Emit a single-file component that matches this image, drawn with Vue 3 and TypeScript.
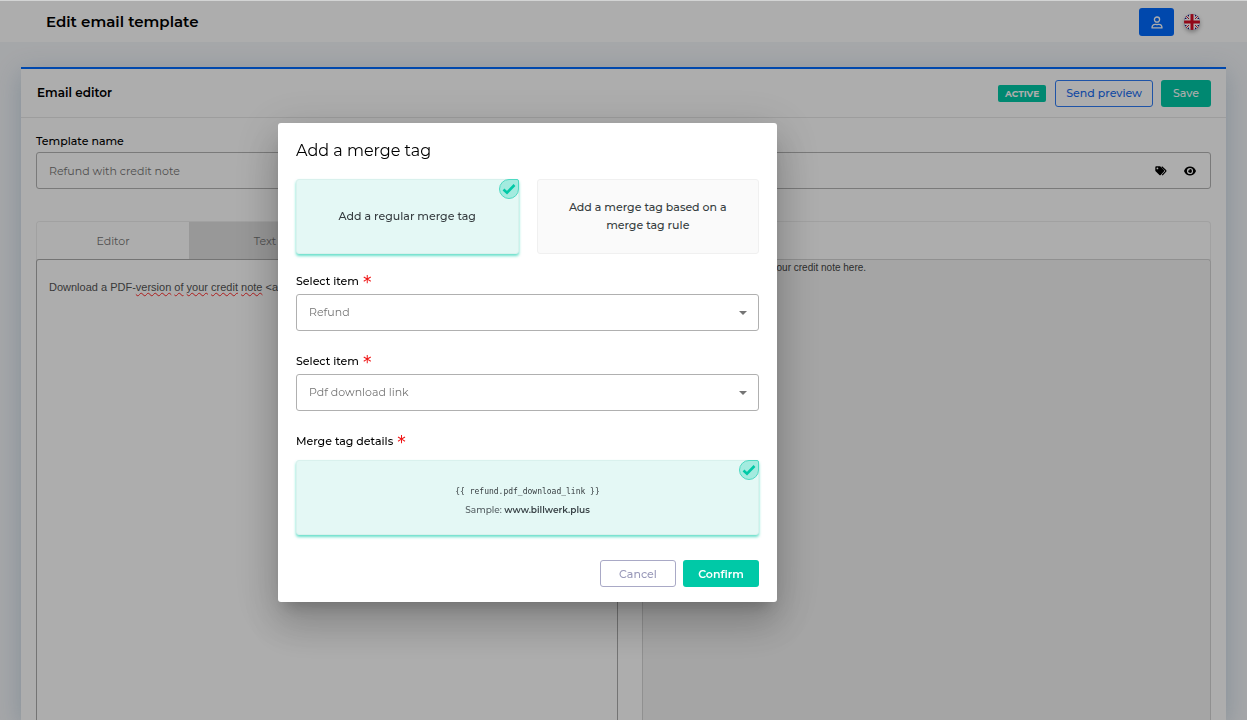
<script setup lang="ts">
import { ref } from 'vue'

interface Word {
  text: string
  misspelled: boolean
}

const templateName = ref('Refund with credit note')
const activeTab = ref('Editor')
const tabs: string[] = ['Editor', 'Text']

const bodyWords: Word[] = [
  { text: 'version', misspelled: true },
  { text: 'of', misspelled: true },
  { text: 'your', misspelled: true },
  { text: 'credit', misspelled: true },
  { text: 'note', misspelled: true },
  { text: '<a', misspelled: false },
  { text: 'href', misspelled: true },
]

const mode = ref('regular')
const modes = [
  { value: 'regular', label: 'Add a regular merge tag' },
  { value: 'rule', label: 'Add a merge tag based on a merge tag rule' },
]

const entity = ref('Refund')
const field = ref('Pdf download link')
const detail = ref('link')
const mergeTag = '{{ refund.pdf_download_link }}'
</script>

<template>
  <div class="page">
    <header class="topbar">
      <h1>Edit email template</h1>
      <div class="topbar-actions">
        <button class="user" type="button" aria-label="Account">
          <svg width="12" height="13" viewBox="0 0 12 13" fill="none" stroke="currentColor" stroke-width="1.3">
            <circle cx="6" cy="3.6" r="2.6" />
            <path d="M1 11.9c0-2.5 1.4-3.6 3.2-3.6.7 0 1 .3 1.8.3s1.1-.3 1.8-.3c1.8 0 3.200 1.100 3.200 3.600z" stroke-linejoin="round" />
          </svg>
        </button>
        <button class="flag" type="button" aria-label="English">
          <svg width="16" height="16" viewBox="0 0 16 16">
            <defs><clipPath id="disc"><circle cx="8" cy="8" r="8" /></clipPath></defs>
            <g clip-path="url(#disc)">
              <rect width="16" height="16" fill="#12127d" />
              <path d="M0 0l16 16M16 0L0 16" stroke="#fff" stroke-width="3" />
              <path d="M0 0l16 16M16 0L0 16" stroke="#d2122e" stroke-width="1" />
              <path d="M8 0v16M0 8h16" stroke="#fff" stroke-width="6" />
              <path d="M8 0v16M0 8h16" stroke="#d80d25" stroke-width="3" />
            </g>
          </svg>
        </button>
      </div>
    </header>

    <main class="card">
      <div class="card-head">
        <h2>Email editor</h2>
        <div class="card-actions">
          <span class="badge">ACTIVE</span>
          <button class="btn outline-blue" type="button">Send preview</button>
          <button class="btn solid" type="button">Save</button>
        </div>
      </div>

      <div class="card-body">
        <label class="field-label" for="template-name">Template name</label>
        <div class="name-box">
          <input id="template-name" v-model="templateName" type="text" />
          <button class="icon-btn" type="button" aria-label="Merge tags">
            <svg width="12" height="10" viewBox="0 0 12 10">
              <path fill="currentColor" fill-rule="evenodd" d="M.3 1.200C.3.700.7.300 1.200.300h3.500c.3 0 .5.100.700.300l3.500 3.500c.4.400.4.900 0 1.300L5.700 8.900c-.4.400-.9.400-1.300 0L.600 5.200A1 1 0 0 1 .300 4.500zM2.400 1.500a.9.900 0 1 0 0 1.800.9.900 0 0 0 0-1.800z" />
              <path fill="none" stroke="currentColor" stroke-width="1.200" d="M6.700.800l4 3.700c.3.300.3.600 0 .900L7.200 9.100" />
            </svg>
          </button>
          <button class="icon-btn" type="button" aria-label="Preview">
            <svg width="12" height="10" viewBox="0 0 12 10">
              <path fill="currentColor" fill-rule="evenodd" d="M6 .600C3.400.600 1.300 2.100.200 4.500a1 1 0 0 0 0 .9C1.300 7.900 3.400 9.400 6 9.400s4.700-1.500 5.800-4a1 1 0 0 0 0-.9C10.700 2.100 8.600.600 6 .600zM6 1.900a3.100 3.100 0 1 1 0 6.200 3.100 3.100 0 0 1 0-6.200z" />
              <path fill="currentColor" d="M6 3.100a1.900 1.900 0 1 1-1.800 1.400c.9.300 1.600-.400 1.300-1.300z" />
            </svg>
          </button>
        </div>

        <div class="workspace">
          <div class="tabbar" role="tablist">
            <button
              v-for="tab in tabs"
              :key="tab"
              class="tab"
              :class="{ idle: tab !== activeTab }"
              type="button"
              role="tab"
              :aria-selected="tab === activeTab"
              @click="activeTab = tab"
            >{{ tab }}</button>
          </div>
          <div class="panes">
            <div class="pane source" contenteditable="true" role="textbox" aria-label="Email body" spellcheck="false">
              Download a PDF-<template v-for="(word, i) in bodyWords" :key="i"><span :class="{ typo: word.misspelled }">{{ word.text }}</span>{{ ' ' }}</template>
            </div>
            <div class="pane preview">Download a PDF-version of your credit note here.</div>
          </div>
        </div>
      </div>
    </main>

    <div class="backdrop">
      <form class="dialog" role="dialog" aria-modal="true" aria-labelledby="dialog-title" @submit.prevent>
        <h3 id="dialog-title">Add a merge tag</h3>

        <div class="choices">
          <label v-for="m in modes" :key="m.value" class="choice" :class="{ selected: mode === m.value }">
            <input v-model="mode" class="hidden-radio" type="radio" name="mode" :value="m.value" />
            <span class="choice-text">{{ m.label }}</span>
            <span v-if="mode === m.value" class="tick">
              <svg width="14" height="12" viewBox="0 0 14 12" fill="none" stroke="#00c9a7" stroke-width="2.600">
                <path d="M1.500 6.500L5 9.700 12.500 2" />
              </svg>
            </span>
          </label>
        </div>

        <div class="group">
          <label class="field-label" for="entity">Select item <span class="req">*</span></label>
          <div class="select-box">
            <select id="entity" v-model="entity"><option>Refund</option></select>
            <svg class="caret" width="8" height="4" viewBox="0 0 8 4"><path d="M0 0h8L4 4z" fill="#757575" /></svg>
          </div>
        </div>

        <div class="group">
          <label class="field-label" for="field">Select item <span class="req">*</span></label>
          <div class="select-box">
            <select id="field" v-model="field"><option>Pdf download link</option></select>
            <svg class="caret" width="8" height="4" viewBox="0 0 8 4"><path d="M0 0h8L4 4z" fill="#757575" /></svg>
          </div>
        </div>

        <div class="group">
          <div class="field-label">Merge tag details <span class="req">*</span></div>
          <label class="choice detail selected">
            <input v-model="detail" class="hidden-radio" type="radio" name="detail" value="link" />
            <code>{{ mergeTag }}</code>
            <span class="sample">Sample: <b>www.billwerk.plus</b></span>
            <span class="tick">
              <svg width="14" height="12" viewBox="0 0 14 12" fill="none" stroke="#00c9a7" stroke-width="2.600">
                <path d="M1.500 6.500L5 9.700 12.500 2" />
              </svg>
            </span>
          </label>
        </div>

        <div class="dialog-actions">
          <button class="btn wide outline-grey" type="button">Cancel</button>
          <button class="btn wide solid" type="submit">Confirm</button>
        </div>
      </form>
    </div>
  </div>
</template>

<style>
body {
  margin: 0;
  overflow: hidden;
}
</style>

<style scoped>
* {
  box-sizing: border-box;
}

.page {
  display: flex;
  flex-direction: column;
  height: 100vh;
  overflow: hidden;
  background: #f4f6f9;
  color: #000;
  font-family: Montserrat, Inter, sans-serif;
  font-size: 11px;
  line-height: 18px;
}

button,
input,
select {
  font: inherit;
  color: inherit;
  margin: 0;
}

button {
  cursor: pointer;
}

h1,
h2,
h3 {
  margin: 0;
}

.topbar {
  display: flex;
  align-items: center;
  justify-content: space-between;
  flex: none;
  height: 42px;
  padding: 1px 47px 0 46px;
  border-top: 1px solid #d3d4d4;
  background: #fff;
}

h1 {
  font-size: 15px;
  line-height: 20px;
  font-weight: 600;
}

.topbar-actions {
  display: flex;
  align-items: center;
  gap: 10px;
}

.user {
  display: flex;
  align-items: center;
  justify-content: center;
  width: 35px;
  height: 28px;
  padding: 0;
  border: 0;
  border-radius: 3px;
  background: #006aff;
  color: #fff;
}

.flag {
  display: flex;
  padding: 0;
  border: 0;
  border-radius: 50%;
  background: none;
  box-shadow: 0 2px 4px rgba(0, 0, 0, 0.3);
}

.card {
  display: flex;
  flex-direction: column;
  flex: 1;
  min-height: 0;
  margin: 25px 21px 0;
  border-top: 2px solid #006aff;
  background: #fff;
  box-shadow: 0 6px 24px rgba(80, 125, 165, 0.3);
}

.card-head {
  display: flex;
  align-items: center;
  justify-content: space-between;
  height: 49px;
  padding: 0 15px 0 16px;
  border-bottom: 1px solid #e8e8e8;
}

h2 {
  font-size: 12px;
  line-height: 20px;
  font-weight: 600;
}

.card-actions {
  display: flex;
  align-items: center;
  gap: 8px;
}

.badge {
  margin-right: 1px;
  padding: 0 7px;
  border-radius: 2px;
  background: #00c9a7;
  color: #fff;
  font-size: 9px;
  line-height: 17px;
  font-weight: 700;
}

.btn {
  height: 27px;
  padding: 0 11px;
  border: 1px solid transparent;
  border-radius: 3px;
  background: #fff;
  font-weight: 500;
}

.solid {
  background: #00c9a7;
  color: #fff;
}

.outline-blue {
  padding: 0 10px;
  border-color: #2f7df6;
  color: #1a6df0;
}

.outline-grey {
  border-color: #a9a9c6;
  color: #9a9aba;
}

.wide {
  width: 76px;
}

.wide.solid {
  font-weight: 600;
}

.card-body {
  display: flex;
  flex-direction: column;
  flex: 1;
  min-height: 0;
  padding: 14px 15px 0;
}

.field-label {
  display: flex;
  align-items: center;
  flex: none;
  height: 18px;
  gap: 4px;
  font-weight: 500;
}

.name-box {
  display: flex;
  align-items: center;
  flex: none;
  height: 37px;
  margin-top: 2px;
  padding: 0 14px 0 12px;
  gap: 17px;
  border: 1px solid #b4b4b4;
  border-radius: 3px;
}

.name-box input {
  flex: 1;
  min-width: 0;
  padding: 0;
  border: 0;
  outline: 0;
  background: none;
  color: #757575;
}

.icon-btn {
  display: flex;
  padding: 0;
  border: 0;
  background: none;
  color: #000;
}

.workspace {
  display: flex;
  flex-direction: column;
  flex: 1;
  margin-top: 32px;
  min-height: 0;
}

.tabbar {
  display: flex;
  flex: none;
  height: 39px;
  border: 1px solid #eee;
  border-bottom: 0;
  border-radius: 4px 4px 0 0;
  overflow: hidden;
}

.tab {
  width: 152px;
  padding: 0;
  border: 0;
  background: #fff;
  color: #757575;
}

.tab.idle {
  background: #e0e0e0;
}

.panes {
  display: grid;
  grid-template-columns: 581fr 569fr;
  gap: 24px;
  flex: 1;
  margin-top: -1px;
  font-family: "Liberation Sans", Arial, sans-serif;
}

.pane {
  border: 1px solid #ababab;
  border-bottom: 0;
  border-radius: 3px 3px 0 0;
  outline: 0;
}

.source {
  padding: 18px 12px;
  overflow: hidden;
  color: #555;
  font-size: 11px;
  white-space: nowrap;
}

.typo {
  text-decoration: underline wavy #ff2b2b 1px;
  text-decoration-skip-ink: none;
}

.preview {
  padding: 0 4px;
  border-color: #d4d4d4;
  background: #f4f4f4;
  color: #444;
  font-size: 10px;
  line-height: 16px;
}

.backdrop {
  position: fixed;
  inset: 1px 0 0;
  display: flex;
  align-items: flex-start;
  justify-content: center;
  padding: 122px 192px 0 0;
  background: rgba(0, 0, 0, 0.32);
}

.dialog {
  width: 499px;
  padding: 18px 18px 15px;
  border-radius: 3px;
  background: #fff;
  box-shadow: 0 11px 15px -7px rgba(0, 0, 0, 0.2), 0 24px 38px 3px rgba(0, 0, 0, 0.14),
    0 9px 46px 8px rgba(0, 0, 0, 0.12);
}

h3 {
  font-size: 16px;
  line-height: 20px;
  font-weight: 400;
}

.choices {
  display: grid;
  grid-template-columns: 1fr 1fr;
  gap: 18px;
  margin-top: 18px;
}

.choice {
  position: relative;
  display: flex;
  flex-direction: column;
  align-items: center;
  justify-content: center;
  height: 75px;
  padding: 0 30px 2px;
  border: 1px solid #f0f0f0;
  border-radius: 3px;
  background: #fafafa;
  color: #363d40;
  font-weight: 500;
  text-align: center;
  cursor: pointer;
}

.choice.selected {
  border-color: #d9f1ed;
  background: #e4f8f5;
  box-shadow: 0 2px 3px rgba(0, 201, 167, 0.6);
}

.hidden-radio {
  position: absolute;
  opacity: 0;
  pointer-events: none;
}

.tick {
  position: absolute;
  top: -1px;
  right: -1px;
  display: flex;
  align-items: center;
  justify-content: center;
  width: 20px;
  height: 20px;
  border: 1px solid #4fdac3;
  border-radius: 10px 2px 10px 10px;
  background: #a3ebdf;
}

.group {
  margin-top: 18px;
}

.group + .group {
  margin-top: 21px;
}

.req {
  height: 18px;
  color: #f01818;
  font-size: 22px;
  line-height: 26px;
  font-weight: 400;
}

.select-box {
  position: relative;
  margin-top: 4px;
}

.select-box select {
  display: block;
  width: 100%;
  height: 37px;
  padding: 0 12px 2px;
  border: 1px solid #b0b0b0;
  border-radius: 3px;
  appearance: none;
  background: #fff;
  color: #757575;
}

.caret {
  position: absolute;
  top: 17px;
  right: 12px;
  pointer-events: none;
}

.choice.detail {
  margin-top: 10px;
  padding-top: 8px;
}

.detail code {
  font-family: "DejaVu Sans Mono", monospace;
  font-size: 8px;
  line-height: 18px;
  font-weight: 400;
}

.sample {
  color: #555f63;
  font-size: 9px;
  font-weight: 500;
}

.sample b {
  color: #3a4448;
  font-weight: 600;
}

.dialog-actions {
  display: flex;
  justify-content: flex-end;
  gap: 7px;
  margin-top: 25px;
}
</style>
